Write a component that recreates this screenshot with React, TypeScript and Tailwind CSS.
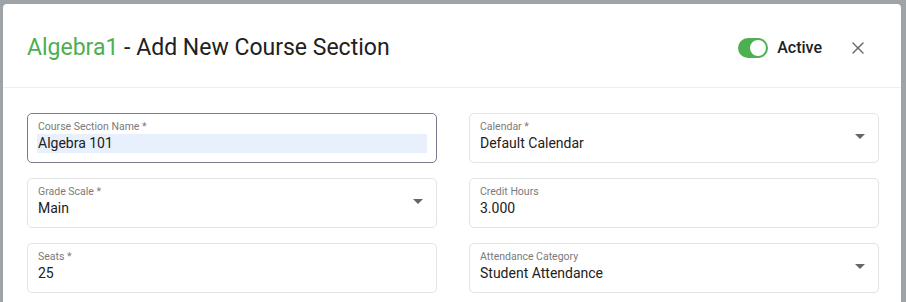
import { X } from "lucide-react";

type FieldProps = {
  label: string;
  value: string;
  select?: boolean;
  focused?: boolean;
};

function Field({ label, value, select, focused }: FieldProps) {
  return (
    <div
      className={`relative h-[50px] rounded-[5px] border px-[9px] pt-[5px] ${
        focused ? "border-[#807891]" : "border-[#e3e3e3]"
      }`}
    >
      <div className="pl-[1px] text-[10.5px] leading-[15px] text-[#7a7a7a]">{label}</div>
      <div
        className={`h-[19px] pl-[1px] text-[14px] leading-[19px] text-[#212121] ${
          focused ? "bg-[#e8f0fe]" : ""
        }`}
      >
        {value}
      </div>
      {select && (
        <div className="absolute right-[13px] top-[20px] h-0 w-0 border-x-[5px] border-t-[5px] border-x-transparent border-t-[#666]" />
      )}
    </div>
  );
}

export default function App() {
  return (
    <div className="h-[302px] w-[906px] overflow-hidden bg-[#9ea3a8] pl-[3px] pr-[5px] pt-[4px] font-['Roboto',sans-serif]">
      <div className="h-full rounded-t-[4px] bg-white">
        <div className="flex h-[84px] items-center justify-between border-b border-[#eeeeee] pl-[24px] pr-[33px] pt-[5px]">
          <h2 className="text-[23px] font-normal text-[#212121]">
            <span className="text-[#4caf50]">Algebra1</span> - Add New Course Section
          </h2>
          <div className="flex items-center">
            <div className="flex h-[20px] w-[30px] items-center justify-end rounded-full bg-[#4caf50] pr-[2px]">
              <div className="h-[16px] w-[16px] rounded-full bg-white" />
            </div>
            <span className="ml-[9px] text-[16px] font-medium text-[#212121]">Active</span>
            <X className="ml-[26px] h-[20px] w-[20px] text-[#666]" strokeWidth={1.6} />
          </div>
        </div>
        <div className="grid grid-cols-2 gap-x-[32px] gap-y-[15px] pl-[24px] pr-[22px] pt-[25px]">
          <Field label="Course Section Name *" value="Algebra 101" focused />
          <Field label="Calendar *" value="Default Calendar" select />
          <Field label="Grade Scale *" value="Main" select />
          <Field label="Credit Hours" value="3.000" />
          <Field label="Seats *" value="25" />
          <Field label="Attendance Category" value="Student Attendance" select />
        </div>
      </div>
    </div>
  );
}
